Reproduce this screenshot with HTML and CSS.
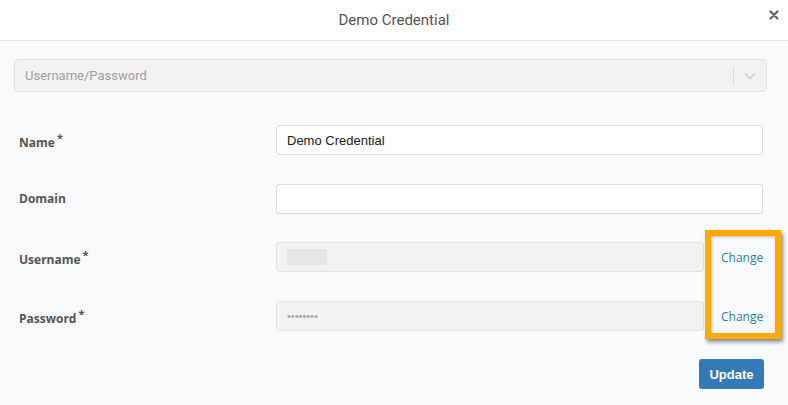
FILE: index.html
```html
<!DOCTYPE html>
<html lang="en">
<head>
  <meta charset="UTF-8">
  <title>Demo Credential</title>
  <link rel="stylesheet" href="styles.css">
</head>
<body>

  <div class="modal">
    <div class="modal-header">
      <h4 class="modal-title">Demo Credential</h4>
      <span class="close">
        <svg width="10" height="10" viewBox="0 0 10 10"><path d="M1.5 1.5 L8.5 8.5 M8.5 1.5 L1.5 8.5" stroke="#666" stroke-width="2.4" stroke-linecap="round"/></svg>
      </span>
    </div>

    <div class="modal-body">
      <div class="select">
        <span class="select-value">Username/Password</span>
        <span class="select-arrow">
          <svg width="12" height="8" viewBox="0 0 12 8"><path d="M1 1.5 L6 6.5 L11 1.5" fill="none" stroke="#c8c8c8" stroke-width="1.3"/></svg>
        </span>
      </div>

      <div class="form">
        <div class="row">
          <label>Name<sup>*</sup></label>
          <div class="field"><input type="text" class="input" value="Demo Credential"></div>
        </div>
        <div class="row">
          <label>Domain</label>
          <div class="field"><input type="text" class="input" value=""></div>
        </div>
        <div class="row">
          <label>Username<sup>*</sup></label>
          <div class="field">
            <div class="input disabled"><span class="blur"></span></div>
            <a class="change" href="#">Change</a>
          </div>
        </div>
        <div class="row">
          <label>Password<sup>*</sup></label>
          <div class="field">
            <div class="input disabled"><span class="dots">&bull;&bull;&bull;&bull;&bull;&bull;&bull;&bull;</span></div>
            <a class="change" href="#">Change</a>
          </div>
        </div>
      </div>

      <div class="footer">
        <button class="button">Update</button>
      </div>
    </div>

    <!-- highlight round the Change links -->
    <div class="highlight"></div>
  </div>

</body>
</html>
```

FILE: styles.css
```css
body {
  margin: 0;
  font-family: "Open Sans", Arial, sans-serif;
  background-color: #fff;
}

.modal {
  position: relative;
  width: 788px;
  height: 405px;
  overflow: hidden;
  background-color: #f9fafc;
}

.modal-header {
  height: 40px;
  background-color: #fff;
  border-bottom: 1px solid #e3e3e3;
  display: flex;
  align-items: center;
  justify-content: center;
  position: relative;
}

.modal-title {
  margin: 0;
  font-family: "Roboto", sans-serif;
  font-weight: normal;
  font-size: 15px;
  color: #555;
}

.close {
  position: absolute;
  right: 9px;
  top: 10px;
  line-height: 0;
}

.modal-body {
  padding: 18px 21px 0 14px;
}

.select {
  height: 31px;
  background-color: #f2f2f2;
  border: 1px solid #e2e2e2;
  border-radius: 4px;
  display: flex;
  align-items: center;
}

.select-value {
  flex: 1;
  padding-left: 10px;
  font-family: "Roboto", sans-serif;
  font-size: 13px;
  color: #a0a0a0;
}

.select-arrow {
  width: 32px;
  height: 18px;
  border-left: 1px solid #dcdcdc;
  display: flex;
  align-items: center;
  justify-content: center;
}

.form {
  margin-top: 33px;
  padding-right: 4px;
  display: flex;
  flex-direction: column;
  gap: 28.7px;
}

.row {
  display: flex;
  align-items: center;
  height: 30px;
}

.row label {
  width: 257px;
  padding-left: 5px;
  font-size: 12px;
  font-weight: bold;
  color: #555;
}

.row sup {
  font-size: 11px;
  margin-left: 2px;
}

.field {
  flex: 1;
  display: flex;
  align-items: center;
  height: 30px;
}

.input {
  flex: 1;
  box-sizing: border-box;
  height: 30px;
  margin: 0;
  padding: 0 10px;
  border: 1px solid #dcdcdc;
  border-radius: 3px;
  background-color: #fff;
  font-family: "Liberation Sans", Arial, sans-serif;
  font-size: 13px;
  color: #222;
  outline: none;
  display: flex;
  align-items: center;
}

.input.disabled {
  background-color: #f2f2f2;
  border-color: #e2e2e2;
}

.blur {
  width: 40px;
  height: 16px;
  background-color: #e6e6e6;
}

.dots {
  font-size: 11px;
  letter-spacing: 0;
  color: #a5a5a5;
}

.change {
  width: 42px;
  margin-left: 17px;
  font-size: 12px;
  color: #337ab7;
  text-decoration: none;
}

.footer {
  margin-top: 28px;
  display: flex;
  justify-content: flex-end;
  padding-right: 3px;
}

.button {
  width: 65px;
  height: 30px;
  background-color: #337ab7;
  color: #fff;
  border: none;
  border-radius: 3px;
  font-family: "Liberation Sans", Arial, sans-serif;
  font-size: 13px;
  font-weight: bold;
  cursor: pointer;
}

.highlight {
  position: absolute;
  left: 705px;
  top: 230px;
  width: 64px;
  height: 97px;
  border: 6px solid #f9ab00;
  box-shadow: 2px 3px 4px rgba(0, 0, 0, 0.45), inset 1px 1px 3px rgba(0, 0, 0, 0.25);
}
```
